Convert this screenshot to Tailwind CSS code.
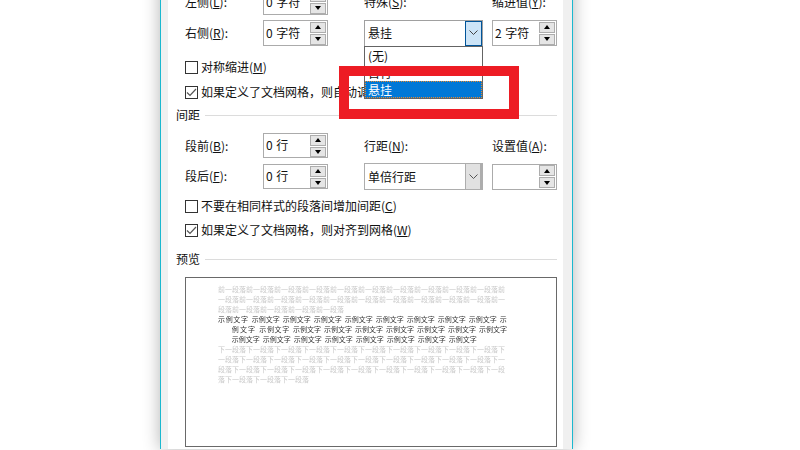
<!DOCTYPE html>
<html lang="zh-CN">
<head>
    <meta charset="UTF-8">
    <script src="https://cdn.jsdelivr.net/npm/@tailwindcss/browser@4"></script>
    <title>段落</title>
</head>
<body class="bg-white overflow-hidden">
    <div class="w-[800px] h-[450px] overflow-hidden relative font-['Noto_Sans_CJK_SC','Noto_Sans',sans-serif] text-[12px] text-[#111]">
        <!-- dialog window, top part is cut off by the screenshot -->
        <div class="ml-[160px] w-[413px] h-[470px] -mt-[21px] border-x border-[#1bb8cf] bg-[#f0f0f0] pl-[7px] pr-[9px] shadow-[0_0_16px_rgba(0,0,0,0.3)]">
            <div class="bg-white h-full pl-[8px] relative">

                <!-- indent rows -->
                <div class="flex pt-[10px]">
                    <div class="w-[372px] ml-[9px] flex flex-col gap-[5px]">
                        <div class="flex items-center h-[26px]">
                            <span class="w-[78px]">左侧(<u>L</u>):</span>
                            <div class="w-[65px] h-[26px] border border-[#ababab] flex justify-between items-center pl-[2px] pr-[1px]">
                                <span class="[word-spacing:1px]">0 字符</span>
                                <div class="flex flex-col gap-px">
                                    <span class="w-[16px] h-[11px] bg-[#e5e5e5] border border-[#adadad] flex items-center justify-center"><span class="border-x-[3px] border-x-transparent border-b-[4px] border-b-black"></span></span>
                                    <span class="w-[16px] h-[11px] bg-[#e5e5e5] border border-[#adadad] flex items-center justify-center"><span class="border-x-[3px] border-x-transparent border-t-[4px] border-t-black"></span></span>
                                </div>
                            </div>
                            <span class="ml-[36px] w-[128px]">特殊(<u>S</u>):</span>
                            <span>缩进值(<u>Y</u>):</span>
                        </div>
                        <div class="flex items-center h-[26px]">
                            <span class="w-[78px]">右侧(<u>R</u>):</span>
                            <div class="w-[65px] h-[26px] border border-[#ababab] flex justify-between items-center pl-[2px] pr-[1px]">
                                <span class="[word-spacing:1px]">0 字符</span>
                                <div class="flex flex-col gap-px">
                                    <span class="w-[16px] h-[11px] bg-[#e5e5e5] border border-[#adadad] flex items-center justify-center"><span class="border-x-[3px] border-x-transparent border-b-[4px] border-b-black"></span></span>
                                    <span class="w-[16px] h-[11px] bg-[#e5e5e5] border border-[#adadad] flex items-center justify-center"><span class="border-x-[3px] border-x-transparent border-t-[4px] border-t-black"></span></span>
                                </div>
                            </div>
                            <div class="ml-[36px] w-[119px] h-[27px] border border-[#a0a0a0] flex items-center justify-between pl-[3px] relative">
                                <span>悬挂</span>
                                <span class="w-[17px] h-[25px] bg-[#cce4f7] border border-[#005499] flex items-center justify-center">
                                    <svg width="9" height="6" viewBox="0 0 9 6" fill="none" stroke="#444" stroke-width="1"><path d="M0.5 0.5L4.5 4.5L8.5 0.5"/></svg>
                                </span>
                                <!-- open dropdown list -->
                                <div class="absolute left-[-1px] top-[25px] w-[119px] h-[53px] border border-[#646464] bg-white z-10 flex flex-col">
                                    <span class="h-[17px] leading-[17px] pl-[3px]">(无)</span>
                                    <span class="h-[17px] leading-[17px] pl-[3px]">首行</span>
                                    <span class="h-[17px] leading-[17px] pl-[3px] bg-[#0078d7] text-white outline-1 outline-dotted -outline-offset-1 outline-[#e8892b]">悬挂</span>
                                </div>
                            </div>
                            <div class="ml-[9px] w-[65px] h-[26px] border border-[#ababab] flex justify-between items-center pl-[2px] pr-[1px]">
                                <span class="[word-spacing:1px]">2 字符</span>
                                <div class="flex flex-col gap-px">
                                    <span class="w-[16px] h-[11px] bg-[#e5e5e5] border border-[#adadad] flex items-center justify-center"><span class="border-x-[3px] border-x-transparent border-b-[4px] border-b-black"></span></span>
                                    <span class="w-[16px] h-[11px] bg-[#e5e5e5] border border-[#adadad] flex items-center justify-center"><span class="border-x-[3px] border-x-transparent border-t-[4px] border-t-black"></span></span>
                                </div>
                            </div>
                        </div>
                    </div>
                </div>

                <div class="ml-[9px] mt-[14px] flex items-center gap-[3px] h-[14px]">
                    <span class="w-[13px] h-[13px] border border-[#333] bg-white"></span>
                    <span>对称缩进(<u>M</u>)</span>
                </div>
                <div class="ml-[9px] mt-[11px] flex items-center gap-[3px] h-[14px] whitespace-nowrap">
                    <span class="w-[13px] h-[13px] border border-[#333] bg-white flex items-center justify-center">
                        <svg width="11" height="9" viewBox="0 0 11 9" fill="none" stroke="#555" stroke-width="1.2"><path d="M1 4.5L4 7.5L10 1"/></svg>
                    </span>
                    <span>如果定义了文档网格，则自动调整右缩进(<u>D</u>)</span>
                </div>

                <!-- spacing section -->
                <div class="mt-[7px] flex items-center gap-[5px] h-[18px]">
                    <span>间距</span>
                    <span class="w-[352px] h-px bg-[#dcdcdc]"></span>
                </div>
                <div class="ml-[9px] mt-[9px] flex">
                    <div class="w-[179px] flex flex-col gap-[6px]">
                        <div class="flex items-center h-[25px]">
                            <span class="w-[78px]">段前(<u>B</u>):</span>
                            <div class="w-[65px] h-[25px] border border-[#ababab] flex justify-between items-center pl-[2px] pr-[1px]">
                                <span class="[word-spacing:1px] mb-[2px]">0 行</span>
                                <div class="flex flex-col gap-px">
                                    <span class="w-[16px] h-[11px] bg-[#e5e5e5] border border-[#adadad] flex items-center justify-center"><span class="border-x-[3px] border-x-transparent border-b-[4px] border-b-black"></span></span>
                                    <span class="w-[16px] h-[10px] bg-[#e5e5e5] border border-[#adadad] flex items-center justify-center"><span class="border-x-[3px] border-x-transparent border-t-[4px] border-t-black"></span></span>
                                </div>
                            </div>
                        </div>
                        <div class="flex items-center h-[25px]">
                            <span class="w-[78px] mb-[2px]">段后(<u>F</u>):</span>
                            <div class="w-[65px] h-[25px] border border-[#ababab] flex justify-between items-center pl-[2px] pr-[1px]">
                                <span class="[word-spacing:1px] mb-[2px]">0 行</span>
                                <div class="flex flex-col gap-px">
                                    <span class="w-[16px] h-[11px] bg-[#e5e5e5] border border-[#adadad] flex items-center justify-center"><span class="border-x-[3px] border-x-transparent border-b-[4px] border-b-black"></span></span>
                                    <span class="w-[16px] h-[10px] bg-[#e5e5e5] border border-[#adadad] flex items-center justify-center"><span class="border-x-[3px] border-x-transparent border-t-[4px] border-t-black"></span></span>
                                </div>
                            </div>
                        </div>
                    </div>
                    <div class="flex flex-col">
                        <div class="flex h-[25px] items-center">
                            <span class="w-[128px]">行距(<u>N</u>):</span>
                            <span>设置值(<u>A</u>):</span>
                        </div>
                        <div class="flex items-center mt-[5px]">
                            <div class="w-[119px] h-[27px] border border-[#adadad] flex items-center justify-between pl-[3px]">
                                <span>单倍行距</span>
                                <span class="w-[17px] h-[25px] bg-[#e1e1e1] border-r-2 border-l border-[#adadad] flex items-center justify-center">
                                    <svg width="9" height="6" viewBox="0 0 9 6" fill="none" stroke="#555" stroke-width="1"><path d="M0.5 0.5L4.5 4.5L8.5 0.5"/></svg>
                                </span>
                            </div>
                            <div class="ml-[9px] w-[65px] h-[26px] border border-[#ababab] flex justify-end items-center pr-[1px]">
                                <div class="flex flex-col gap-px">
                                    <span class="w-[16px] h-[11px] bg-[#e5e5e5] border border-[#adadad] flex items-center justify-center"><span class="border-x-[3px] border-x-transparent border-b-[4px] border-b-black"></span></span>
                                    <span class="w-[16px] h-[11px] bg-[#e5e5e5] border border-[#adadad] flex items-center justify-center"><span class="border-x-[3px] border-x-transparent border-t-[4px] border-t-black"></span></span>
                                </div>
                            </div>
                        </div>
                    </div>
                </div>

                <div class="ml-[9px] mt-[9px] flex items-center gap-[3px] h-[14px]">
                    <span class="w-[13px] h-[13px] border border-[#333] bg-white"></span>
                    <span>不要在相同样式的段落间增加间距(<u>C</u>)</span>
                </div>
                <div class="ml-[9px] mt-[10px] flex items-center gap-[3px] h-[14px]">
                    <span class="w-[13px] h-[13px] border border-[#333] bg-white flex items-center justify-center">
                        <svg width="11" height="9" viewBox="0 0 11 9" fill="none" stroke="#555" stroke-width="1.2"><path d="M1 4.5L4 7.5L10 1"/></svg>
                    </span>
                    <span>如果定义了文档网格，则对齐到网格(<u>W</u>)</span>
                </div>

                <!-- preview -->
                <div class="mt-[13px] flex items-center gap-[5px] h-[18px]">
                    <span>预览</span>
                    <span class="w-[352px] h-px bg-[#dcdcdc]"></span>
                </div>
                <div class="ml-[9px] mt-[9px] w-[372px] h-[170px] border border-[#696969]">
                    <div class="pt-[6px] pl-[32px] text-[7px] leading-[10px] whitespace-nowrap blur-[0.3px]">
                        <div class="text-[#c9c9c9]">
                            <p>前一段落前一段落前一段落前一段落前一段落前一段落前一段落前一段落前一段落前一段落前</p>
                            <p>一段落前一段落前一段落前一段落前一段落前一段落前一段落前一段落前一段落前一段落前一</p>
                            <p>段落前一段落前一段落前一段落前一段落</p>
                        </div>
                        <div class="text-[#333]">
                            <p class="flex gap-[3px]"><span class="tracking-[0.67px]">示例文字</span><span>示例文字</span><span>示例文字</span><span>示例文字</span><span>示例文字</span><span>示例文字</span><span>示例文字</span><span>示例文字</span><span>示例文字</span><span>示</span></p>
                            <p class="flex gap-[3px] pl-[13.7px]"><span class="w-[24.6px] tracking-[1.2px]">例文字</span><span class="tracking-[0.67px]">示例文字</span><span>示例文字</span><span>示例文字</span><span>示例文字</span><span>示例文字</span><span>示例文字</span><span>示例文字</span><span>示例文字</span></p>
                            <p class="flex gap-[3px] pl-[13.7px]"><span>示例文字</span><span>示例文字</span><span>示例文字</span><span>示例文字</span><span>示例文字</span><span>示例文字</span><span>示例文字</span><span>示例文字</span></p>
                        </div>
                        <div class="text-[#c9c9c9]">
                            <p>下一段落下一段落下一段落下一段落下一段落下一段落下一段落下一段落下一段落下一段落下</p>
                            <p>一段落下一段落下一段落下一段落下一段落下一段落下一段落下一段落下一段落下一段落下一</p>
                            <p>段落下一段落下一段落下一段落下一段落下一段落下一段落下一段落下一段落下一段落下一段</p>
                            <p>落下一段落下一段落下一段落</p>
                        </div>
                    </div>
                </div>
            </div>
        </div>

        <!-- red annotation box drawn over the screenshot -->
        <div class="absolute left-[339px] top-[66px] w-[180px] h-[53px] border-[10px] border-[#ed1c24] z-20"></div>
    </div>
</body>
</html>
